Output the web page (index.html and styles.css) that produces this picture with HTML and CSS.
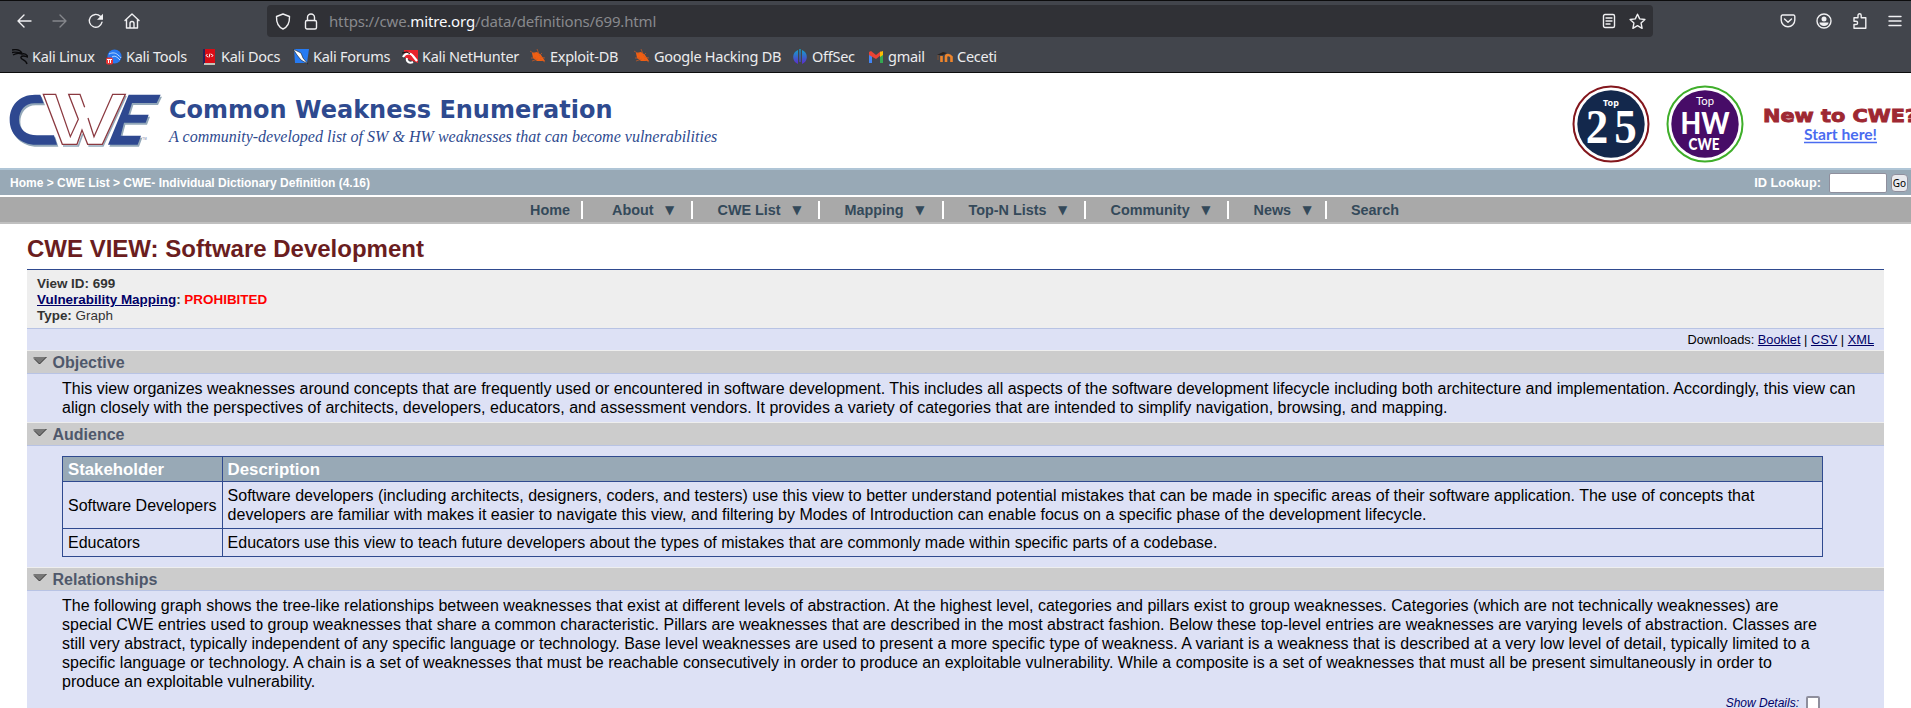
FILE: index.html
```html
<!DOCTYPE html>
<html lang="en">
<head>
<meta charset="utf-8">
<title>CWE - CWE VIEW: Software Development</title>
<link rel="stylesheet" href="styles.css">
</head>
<body>
<div class="browser">
  <div class="toolbar">
    <div class="nav-buttons">
      <svg width="16" height="16" viewBox="0 0 16 16"><path d="M15 8H2M8 2L2 8l6 6"/></svg>
      <svg class="dim" width="16" height="16" viewBox="0 0 16 16"><path d="M1 8h13M8 2l6 6-6 6"/></svg>
      <svg width="16" height="16" viewBox="0 0 16 16"><path d="M14 9.2A6.4 6.4 0 1 1 12.3 3.3L14 5"/><path class="solid" d="M15 .8V6.800H9z"/></svg>
      <svg width="16" height="16" viewBox="0 0 16 16"><path d="M1 7.500L8 1l7 6.500M2.500 6.500V15h11V6.500M6 15v-4.500a2 2 0 0 1 4 0V15"/></svg>
    </div>
    <div class="urlbar">
      <svg width="16" height="17" viewBox="0 0 16 17"><path d="M8 1l6.500 2.500C14.700 9 13 13.800 8 16 3 13.800 1.300 9 1.500 3.500z"/></svg>
      <svg class="lock" width="14" height="17" viewBox="0 0 14 17"><rect x="1.500" y="7.500" width="11" height="8.500" rx="1.500"/><path d="M3.500 7.500V4.500a3.500 3.500 0 0 1 7 0v3"/></svg>
      <span class="url">https://cwe.<b>mitre.org</b>/data/definitions/699.html</span>
      <svg class="reader" width="14" height="16" viewBox="0 0 14 16"><rect x="1.500" y="1.500" width="11" height="13" rx="1.500"/><path d="M4 5h6M4 8h6M4 11h4"/></svg>
      <svg width="17" height="17" viewBox="0 0 17 17"><path d="M8.500 1.200l2.200 4.700 5.200.6-3.800 3.600 1 5.200-4.600-2.600-4.600 2.600 1-5.200L1.100 6.500l5.200-.6z"/></svg>
    </div>
    <div class="tools">
      <svg width="16" height="16" viewBox="0 0 16 16"><path d="M2.500 2h11a1.300 1.300 0 0 1 1.300 1.300V7a6.800 6.800 0 0 1-13.600 0V3.300A1.300 1.300 0 0 1 2.500 2zM4.500 6L8 9.300 11.500 6"/></svg>
      <svg width="16" height="16" viewBox="0 0 16 16"><circle cx="8" cy="8" r="7"/><circle class="solid" cx="8" cy="6" r="2.500"/><path class="solid" d="M3.500 9.500h9c0 2-2 3.500-4.500 3.500s-4.500-1.500-4.500-3.500z"/></svg>
      <svg width="16" height="16" viewBox="0 0 16 16"><path d="M2 15.200V11.500h2a1.600 1.600 0 0 0 0-3.200H2V4.700h4V2.400a1.600 1.600 0 0 1 3.200 0v2.300h4.600V15.200z"/></svg>
      <svg width="14" height="14" viewBox="0 0 14 14"><path d="M1 2.500h12M1 7h12M1 11.500h12"/></svg>
    </div>
  </div>
  <div class="bookmarks">
    <span class="bm w1"><svg viewBox="0 0 16 16"><path d="M0 1c5-1 8 0 10 3M0 3.500c4-1 7 0 10 1M1 6c3-2 6-2 9-1 4-1 5 1 6 3-3-1-6-2-7 0-1 3 5 2 6 7" fill="none" stroke="#0b0b0d" stroke-width="1.400"/></svg>Kali Linux</span>
    <span class="bm w2"><svg viewBox="0 0 16 16"><circle cx="8.500" cy="7.500" r="7" fill="#2878f0"/><path d="M3 5c4-2 7-1 9 1s2 1 3 3M6 8c3-2 5 0 8 3" fill="none" stroke="#b9dcff"/><rect y="8.500" width="7" height="7" rx="2" fill="#e93434"/><path d="M1 10.500h5M2.500 10.500v3.500M4.500 10.500v3.500" stroke="#fff"/></svg>Kali Tools</span>
    <span class="bm w3"><svg viewBox="0 0 16 16"><path d="M3 0H14V14H3z" fill="#d80c16"/><path d="M2 0h2v15H2z" fill="#26235a"/><path d="M3 15h11" stroke="#eed" stroke-width="1.500"/><path d="M6.500 5L5 6.500 7 8M9 4.500L8 8.500M10 5l2 1.500L10.500 8" fill="none" stroke="#fff"/></svg>Kali Docs</span>
    <span class="bm w4"><svg viewBox="0 0 16 16"><path d="M1 0h15l-2 14H2z" fill="#267bf3"/><path d="M0 0l8 4 2 5 5 6-7-4-4-5z" fill="#fff" stroke="#16191e" stroke-width=".6"/></svg>Kali Forums</span>
    <span class="bm w5"><svg viewBox="0 0 16 16"><path d="M2 1h14v13L3 9z" fill="#e6232c"/><path d="M1 8c3-5 8-4 10-1l4 5" fill="none" stroke="#fff" stroke-width="2.200"/><path d="M11 13c-4 2-7-1-6-4" fill="none" stroke="#fff" stroke-width="2"/><path d="M0 4l5-1 3 2" fill="none" stroke="#111"/></svg>Kali NetHunter</span>
    <span class="bm w6"><svg viewBox="0 0 16 16"><path d="M2 4l5-1 4 3 2 3 2 3-5 0-3 0-4-3z" fill="#f05f13"/><path d="M0 2l5 3M1 9h5M2 12l6-2M7 0l2 5M12 4l-3 3M15 13l-5-3M15 9l-5-1" stroke="#ce5a22" stroke-width=".7"/></svg>Exploit-DB</span>
    <span class="bm w7"><svg viewBox="0 0 16 16"><path d="M2 4l5-1 4 3 2 3 2 3-5 0-3 0-4-3z" fill="#f05f13"/><path d="M0 2l5 3M1 9h5M2 12l6-2M7 0l2 5M12 4l-3 3M15 13l-5-3M15 9l-5-1" stroke="#ce5a22" stroke-width=".7"/></svg>Google Hacking DB</span>
    <span class="bm w8"><svg viewBox="0 0 16 16"><defs><linearGradient id="os" x2="0" y2="1"><stop stop-color="#12a4c9"/><stop offset="1" stop-color="#5c2ccc"/></linearGradient></defs><path d="M6 1v14A7.500 7.500 0 0 1 6 1zM10 1v14A7.500 7.500 0 0 0 10 1zM7.300 0h1.400v13H7.300z" fill="url(#os)"/></svg>OffSec</span>
    <span class="bm w9"><svg viewBox="0 0 16 16"><path d="M1 4h3v10H1z" fill="#4285f4"/><path d="M12 4h3v10h-3z" fill="#34a853"/><path d="M1 3l2-1 5 4 5-4 0 4-5 4-7-4z" fill="#ea4335"/><path d="M12 3l3-1v4l-3 2z" fill="#fbbc04"/></svg>gmail</span>
    <span class="bm w10"><svg viewBox="0 0 16 16"><path d="M4.500 13V7M9 13V8q0-2 2-2t3.500 2v5" fill="none" stroke="#ee852c" stroke-width="2.600"/><path d="M0 6l6-3 4 1-4 2z" fill="#282320"/><path d="M1 6v5" stroke="#805030"/></svg>Ceceti</span>
  </div>
</div>

<header class="masthead">
  <svg class="logo" width="153" height="56" viewBox="28 64 459 168">
    <g fill="#93a8b9" transform="translate(4 6)"><path d="M122 72H106C58 72 30 105 30 147C30 190 62 222 110 222H172L163 194H112C80 194 58 176 58 148C58 120 76 98 104 98H132z"/><path d="M387 72H483L471 97H397L386 132H447L438 156H373L363 195H424L414 222H325z"/></g>
    <g fill="#2e4890"><path d="M122 72H106C58 72 30 105 30 147C30 190 62 222 110 222H172L163 194H112C80 194 58 176 58 148C58 120 76 98 104 98H132z"/><path d="M387 72H483L471 97H397L386 132H447L438 156H373L363 195H424L414 222H325z"/></g>
    <path d="M131 71H168L212 198 236 146 207 71H241L255 110 265 142 283 198 339 71H377L308 221H264L247 178 232 221H188z" fill="#fff"/>
    <path d="M190 226H236L249 190M266 226H310L379 76" fill="none" stroke="#93a8b9" stroke-width="5"/>
    <path d="M255 110L241 71H207L236 146 212 198 168 71H131L188 221H232L247 178 264 221H308L377 71H339L283 198 265 142" fill="none" stroke="#8b3940" stroke-width="3.800"/>
    <text x="428" y="208" class="tm">TM</text>
  </svg>
  <div class="brand">
    <div class="brand-name">Common Weakness Enumeration</div>
    <div class="brand-sub">A community-developed list of SW &amp; HW weaknesses that can become vulnerabilities</div>
  </div>
  <svg class="badge" width="78" height="78" viewBox="0 0 78 78">
    <circle cx="39" cy="39" r="37.500" fill="#fff" stroke="#83161c" stroke-width="2"/><circle cx="39" cy="39" r="33.700" fill="#13284c"/>
    <text x="39" y="20.500" class="top-a" textLength="16">Top</text>
    <text x="27.200 58.200" y="58" class="num" transform="scale(.92 1)">25</text>
  </svg>
  <svg class="badge" width="78" height="78" viewBox="0 0 78 78">
    <circle cx="39" cy="39" r="37.500" fill="#fff" stroke="#3fae2a" stroke-width="2"/><circle cx="39" cy="39" r="33.700" fill="#470c67"/>
    <text x="39" y="20" class="top-b" textLength="18" lengthAdjust="spacingAndGlyphs">Top</text>
    <text x="39" y="48.500" class="hw" textLength="49" lengthAdjust="spacingAndGlyphs">HW</text>
    <text x="38" y="65" class="cwe" textLength="31" lengthAdjust="spacingAndGlyphs">CWE</text>
  </svg>
  <svg class="newto" width="148" height="50" viewBox="0 0 148 50">
    <text x="0" y="22" class="new" textLength="154" lengthAdjust="spacingAndGlyphs">New to CWE?</text>
    <text x="41" y="40" class="start" textLength="73" lengthAdjust="spacingAndGlyphs">Start here!</text>
    <path d="M41 42.500h73" stroke="#4a6cf0" stroke-width="1.300"/>
  </svg>
</header>

<div class="crumbs">
  <span>Home &gt; CWE List &gt; CWE- Individual Dictionary Definition (4.16)</span>
  <span class="lookup">ID Lookup: <span class="field"></span><span class="go">Go</span></span>
</div>

<nav class="menu">
  <span class="m m1">Home</span><span class="m m2">About<i>▼</i></span><span class="m m3">CWE List<i>▼</i></span><span class="m m4">Mapping<i>▼</i></span><span class="m m5">Top-N Lists<i>▼</i></span><span class="m m6">Community<i>▼</i></span><span class="m m7">News<i>▼</i></span><span class="m m8">Search</span>
</nav>

<main class="content">
  <h1>CWE VIEW: Software Development</h1>
  <div class="meta"><b>View ID: 699</b><br><b><a>Vulnerability Mapping</a>: <em>PROHIBITED</em></b><br><b>Type:</b> Graph</div>
  <div class="downloads">Downloads: <a>Booklet</a> | <a>CSV</a> | <a>XML</a></div>

  <h2><svg class="arrow" width="16" height="9" viewBox="0 0 16 9"><path d="M1 1h13.500L7.500 8z" fill="#777"/><path d="M14.500 1L7.500 8 2 2.500" fill="none" stroke="#333"/></svg>Objective</h2>
  <p class="objective">This view organizes weaknesses around concepts that are frequently used or encountered in software development. This includes all aspects of the software development lifecycle including both architecture and implementation. Accordingly, this view can<br>align closely with the perspectives of architects, developers, educators, and assessment vendors. It provides a variety of categories that are intended to simplify navigation, browsing, and mapping.</p>

  <h2><svg class="arrow" width="16" height="9" viewBox="0 0 16 9"><path d="M1 1h13.500L7.500 8z" fill="#777"/><path d="M14.500 1L7.500 8 2 2.500" fill="none" stroke="#333"/></svg>Audience</h2>
  <div class="audience">
    <table>
      <tr class="head"><th>Stakeholder</th><th>Description</th></tr>
      <tr class="two"><td>Software Developers</td><td>Software developers (including architects, designers, coders, and testers) use this view to better understand potential mistakes that can be made in specific areas of their software application. The use of concepts that<br>developers are familiar with makes it easier to navigate this view, and filtering by Modes of Introduction can enable focus on a specific phase of the development lifecycle.</td></tr>
      <tr class="one"><td>Educators</td><td>Educators use this view to teach future developers about the types of mistakes that are commonly made within specific parts of a codebase.</td></tr>
    </table>
  </div>

  <h2><svg class="arrow" width="16" height="9" viewBox="0 0 16 9"><path d="M1 1h13.500L7.500 8z" fill="#777"/><path d="M14.500 1L7.500 8 2 2.500" fill="none" stroke="#333"/></svg>Relationships</h2>
  <p class="relations">The following graph shows the tree-like relationships between weaknesses that exist at different levels of abstraction. At the highest level, categories and pillars exist to group weaknesses. Categories (which are not technically weaknesses) are<br>special CWE entries used to group weaknesses that share a common characteristic. Pillars are weaknesses that are described in the most abstract fashion. Below these top-level entries are weaknesses are varying levels of abstraction. Classes are<br>still very abstract, typically independent of any specific language or technology. Base level weaknesses are used to present a more specific type of weakness. A variant is a weakness that is described at a very low level of detail, typically limited to a<br>specific language or technology. A chain is a set of weaknesses that must be reachable consecutively in order to produce an exploitable vulnerability. While a composite is a set of weaknesses that must all be present simultaneously in order to<br>produce an exploitable vulnerability.</p>
  <div class="details"><span>Show Details:</span><span class="check"></span></div>
</main>
</body>
</html>
```
FILE: styles.css
```css
* { box-sizing: border-box; }
html { overflow: hidden; }
body {
  margin: 0;
  width: 1911px;
  height: 708px;
  overflow: hidden;
  background: #fff;
  color: #000;
  font: 16px/19px "Liberation Sans", Arial, sans-serif;
  white-space: nowrap;
}

/* browser chrome */
.browser {
  height: 73px;
  background: #42454c;
  border-top: 1px solid #0c0c0d;
  border-bottom: 1px solid #0c0c0d;
  color: #ececee;
  font-family: "Noto Sans", sans-serif;
}
.browser svg { flex: none; }
.toolbar { display: flex; height: 40px; padding-top: 4px; }
.toolbar svg { fill: none; stroke: #f0f0f2; stroke-width: 1.400; stroke-linecap: round; stroke-linejoin: round; }
.toolbar .solid { fill: #f0f0f2; stroke: none; }
.toolbar .dim { stroke: #85878c; }
.nav-buttons { display: flex; align-items: center; gap: 20px; width: 267px; height: 32px; padding-left: 16px; }
.urlbar { display: flex; align-items: center; width: 1386px; height: 32px; padding: 0 7px 0 8px; background: #303136; border-radius: 4px; }
.urlbar .lock { margin-left: 13px; }
.url { flex: 1; margin-left: 11px; font-size: 15px; line-height: 20px; letter-spacing: -0.155px; color: #88898d; }
.url b { font-weight: 400; color: #fbfbfe; }
.urlbar .reader { margin-right: 13px; }
.tools { display: flex; align-items: center; gap: 20px; height: 32px; margin-left: 127px; }
.bookmarks { display: flex; height: 31px; padding: 0 0 0 12px; }
.bm { display: flex; align-items: center; flex: none; font-size: 14.500px; letter-spacing: -0.270px; }
.bm svg { width: 16px; height: 16px; margin-right: 4px; }
.w1 { width: 94px; } .w2 { width: 95px; } .w3 { width: 92px; } .w4 { width: 109px; } .w5 { width: 128px; }
.w6 { width: 104px; } .w7 { width: 158px; } .w8 { width: 76px; } .w9 { width: 69px; } .w10 { width: 70px; }

/* site header */
.masthead { display: flex; height: 95px; padding: 12px 0 0 9px; }
.logo { flex: none; margin-top: 7px; }
.tm { font: 9px "Liberation Sans", sans-serif; fill: #6e7fa8; }
.brand { width: 1403px; margin-left: 7px; color: #2e4a8f; }
.brand-name { margin-top: 10px; font: bold 24px/30px "DejaVu Sans", sans-serif; }
.brand-sub { font: italic 16px/24px "Liberation Serif", serif; word-spacing: 0.060px; }
.badge { flex: none; margin-right: 16px; }
.badge text { fill: #fff; text-anchor: middle; }
.top-a { font: bold 9px "Noto Sans", sans-serif; }
.num { font: bold 44px "Liberation Serif", serif; font-size: 49px; }
.top-b { font: 11px Lato, sans-serif; }
.hw { font: 900 30px Lato, sans-serif; }
.cwe { font: 900 16px Lato, sans-serif; }
.newto { flex: none; margin-top: 15px; margin-left: 3px; }
.new { font: bold 18px "DejaVu Sans", sans-serif; fill: #9e2832; stroke: #9e2832; stroke-width: .9; }
.start { font: bold 16px Lato, sans-serif; fill: #4a6cf0; }

.crumbs {
  display: flex;
  justify-content: space-between;
  height: 27px;
  padding: 0 3px 0 10px;
  border-top: 2px solid #afc5d6;
  background: #98a9b6;
  color: #fff;
  font-size: 12px;
  font-weight: bold;
  line-height: 26px;
}
.lookup { display: flex; align-items: center; font-size: 12.800px; }
.field { width: 58px; height: 20px; margin-left: 8px; border: 1px solid #8f8f9d; border-radius: 2px; background: #fff; }
.go { width: 17px; height: 18px; margin-left: 4px; border: 1px solid #8f8f9d; border-radius: 4px; background: #e9e9ed; color: #000; font: 10px/17px "Noto Sans", sans-serif; text-align: center; }

.menu {
  display: flex;
  height: 27px;
  margin-top: 2px;
  padding: 4px 0 0 530px;
  background: #a9a9a9;
  border-bottom: 2px solid #c0c0c0;
  color: #34495a;
  font-size: 14.400px;
  font-weight: bold;
  line-height: 18px;
}
.m { display: flex; flex: none; height: 18px; padding-left: 24.500px; border-right: 2px solid #fff; }
.m i { margin-left: 11.500px; font: 12px/19px "DejaVu Sans", sans-serif; }
.m1 { width: 53px; padding-left: 0; } .m2 { width: 110px; padding-left: 29px; } .m3 { width: 127px; }
.m4 { width: 124px; } .m5 { width: 142px; } .m6 { width: 143px; } .m7 { width: 98px; } .m8 { border: 0; padding-left: 24px; }

/* definition page */
.content { width: 1857px; margin-left: 27px; }
h1 { height: 46px; margin: 0; padding-top: 11px; border-bottom: 1px solid #2f4a8f; color: #6a1d20; font-size: 24px; line-height: 28px; }
.meta { height: 59px; padding: 6px 10px 0; border-bottom: 1px solid #b8c3e4; background: #eee; color: #333; font-size: 13.440px; line-height: 16px; }
.content a { color: #000066; text-decoration: underline; }
.meta em { color: #f00; font-style: normal; }
.downloads { height: 21px; padding-right: 10px; background: #dde1f5; font-size: 12.800px; line-height: 22px; text-align: right; }
h2 { display: flex; height: 24px; margin: 0; padding: 1px 0 0 5px; border-top: 1px solid #eee; border-bottom: 1px solid #b8c3e4; background: #ccc; color: #4f586b; font-size: 16px; line-height: 21px; }
.arrow { margin: 4px 4.500px 0 0; }
.objective { height: 48px; margin: 0; padding: 5px 35px; background: #dde1f5; word-spacing: 0.030px; }
.audience { height: 121px; padding: 10px 0 0 35px; background: #dde1f5; }
table { width: 1761px; border-collapse: collapse; }
th, td { padding: 0 5px; border: 1px solid #2f4a8f; text-align: left; }
th + th, td + td { padding-left: 4.600px; }
th:first-child { width: 160px; }
th { background: #98a9b6; color: #fff; font-size: 16.800px; }
.head { height: 25px; }
.two { height: 47px; }
.one { height: 28px; }
.relations { margin: 0; padding: 5px 35px 0; background: #dde1f5; word-spacing: 0.030px; }
.details { display: flex; justify-content: flex-end; height: 40px; padding: 5px 64px 0 0; background: #dde1f5; color: #000066; font: italic 12px/15px "Liberation Sans", sans-serif; }
.check { width: 14px; height: 14px; margin-left: 7px; border: 2px solid #8f8f9d; border-radius: 2px; background: #fff; }
```
